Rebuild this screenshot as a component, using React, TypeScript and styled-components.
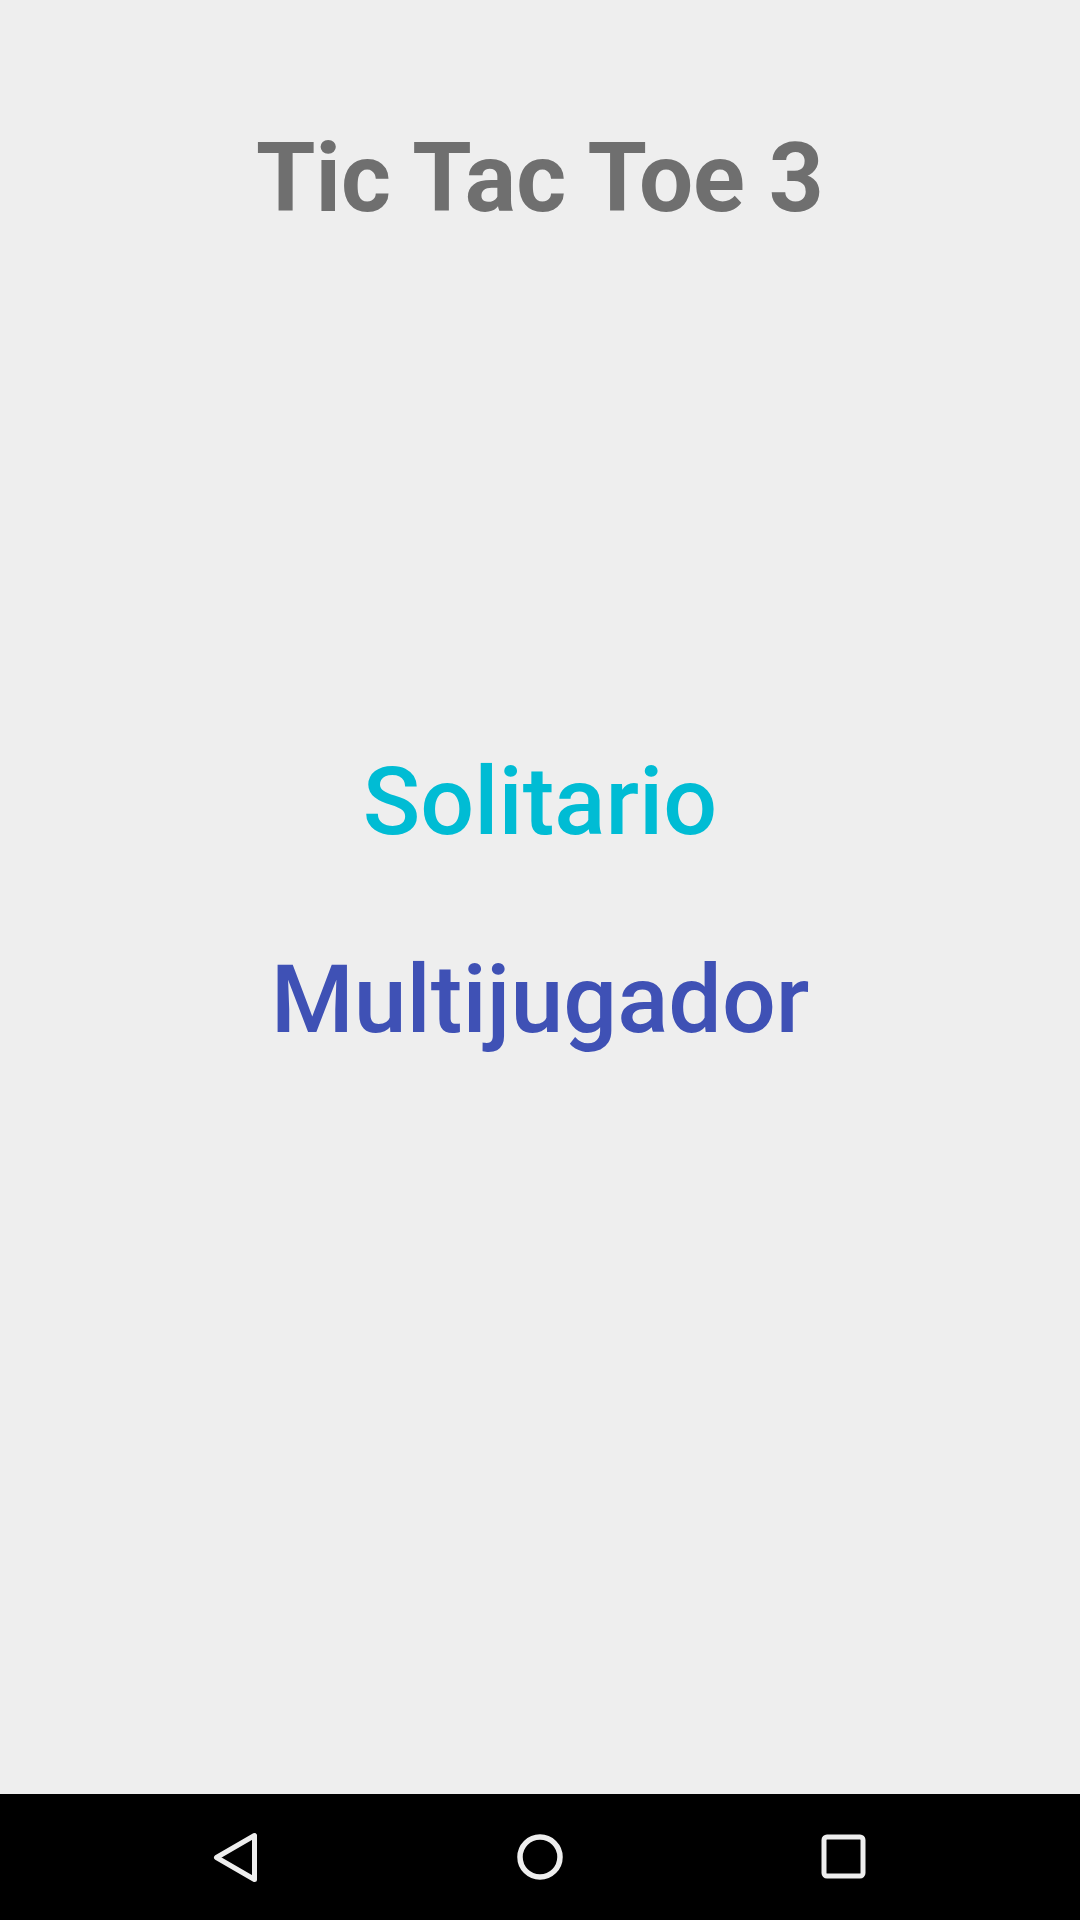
import React from "react";
import styled, { createGlobalStyle } from "styled-components";

const Global = createGlobalStyle`
  html, body { margin: 0; padding: 0; background: #eeeeee; }
  body { font-family: Roboto, "Noto Sans", sans-serif; }
`;

const Screen = styled.div`
  width: 1080px;
  height: 1920px;
  display: flex;
  flex-direction: column;
  background: #eeeeee;
  overflow: hidden;
`;

const Content = styled.main`
  flex: 1;
  display: flex;
  flex-direction: column;
  align-items: center;
  padding-top: 122px;
`;

const Title = styled.h1`
  margin: 0;
  font-family: Roboto, sans-serif;
  font-weight: 700;
  font-size: 96px;
  line-height: 112px;
  color: #6f6f6f;
`;

const Menu = styled.nav`
  display: flex;
  flex-direction: column;
  align-items: center;
  gap: 86px;
  margin-top: 512px;
`;

const MenuButton = styled.button<{ $color: string }>`
  border: none;
  background: transparent;
  padding: 0;
  font-family: Roboto, sans-serif;
  font-weight: 500;
  font-size: 95px;
  line-height: 112px;
  color: ${(p) => p.$color};
  cursor: pointer;
`;

const NavBar = styled.footer`
  height: 126px;
  background: #000000;
  display: grid;
  grid-template-columns: repeat(3, 1fr);
  align-items: center;
  justify-items: center;
  padding: 0 84px;
`;

const NavIcon = styled.svg`
  width: 60px;
  height: 60px;
  display: block;
`;

export default function App() {
  return (
    <>
      <Global />
      <Screen>
        <Content>
          <Title>Tic Tac Toe 3</Title>
          <Menu>
            <MenuButton $color="#00bcd4">Solitario</MenuButton>
            <MenuButton $color="#3f51b5">Multijugador</MenuButton>
          </Menu>
        </Content>
        <NavBar>
          <NavIcon viewBox="0 0 60 60">
            <path
              d="M48.5 8.5 L48.5 52.5 L10.5 30.5 Z"
              fill="none"
              stroke="#eeeeee"
              strokeWidth="5"
              strokeLinejoin="round"
            />
          </NavIcon>
          <NavIcon viewBox="0 0 60 60">
            <circle cx="30" cy="30" r="20" fill="none" stroke="#eeeeee" strokeWidth="5.5" />
          </NavIcon>
          <NavIcon viewBox="0 0 60 60">
            <rect x="10" y="10" width="39" height="39" rx="3" fill="none" stroke="#eeeeee" strokeWidth="5" />
          </NavIcon>
        </NavBar>
      </Screen>
    </>
  );
}
